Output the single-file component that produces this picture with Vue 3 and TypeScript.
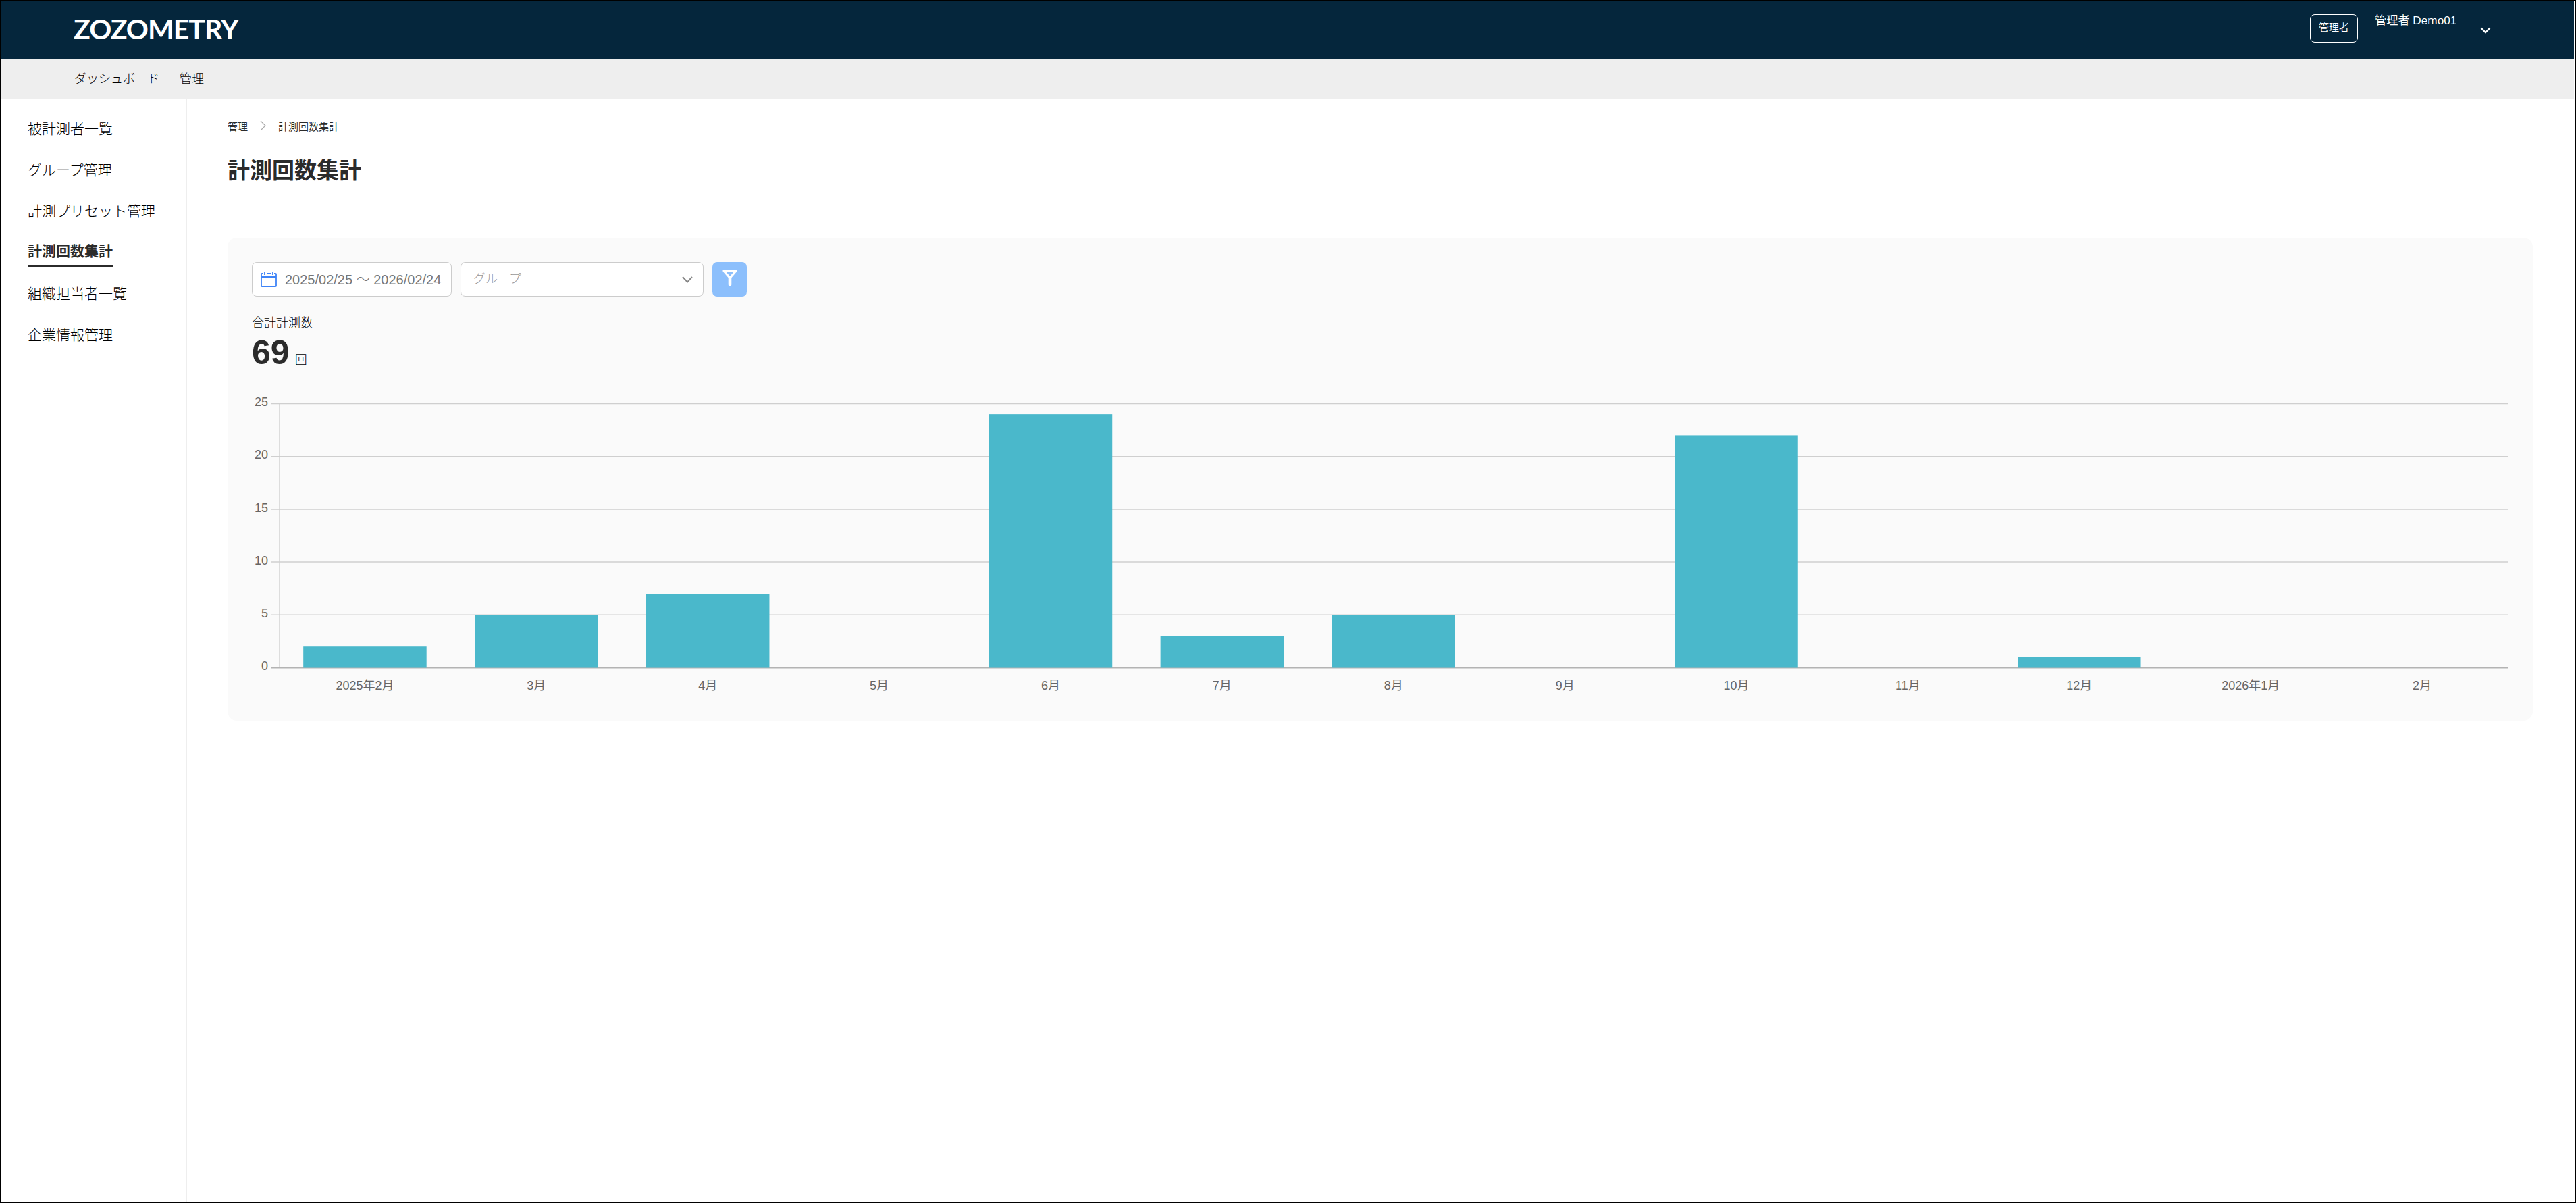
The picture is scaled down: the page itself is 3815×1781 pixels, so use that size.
<script setup lang="ts">
const sideItems = [
  { label: '被計測者一覧', active: false },
  { label: 'グループ管理', active: false },
  { label: '計測プリセット管理', active: false },
  { label: '計測回数集計', active: true },
  { label: '組織担当者一覧', active: false },
  { label: '企業情報管理', active: false },
]

const months = [
  { label: '2025年2月', count: 2 },
  { label: '3月', count: 5 },
  { label: '4月', count: 7 },
  { label: '5月', count: 0 },
  { label: '6月', count: 24 },
  { label: '7月', count: 3 },
  { label: '8月', count: 5 },
  { label: '9月', count: 0 },
  { label: '10月', count: 22 },
  { label: '11月', count: 0 },
  { label: '12月', count: 1 },
  { label: '2026年1月', count: 0 },
  { label: '2月', count: 0 },
]

const ticks = [0, 5, 10, 15, 20, 25]

const chartW = 3342
const chartH = 450
const plotL = 40.5
const plotR = 3341
const plotT = 17.5
const plotH = 391
const catW = (plotR - plotL) / months.length
const barW = 182.5

const tickY = (v: number) => plotT + plotH - (v / 25) * plotH
const catX = (i: number) => plotL + catW * i + catW / 2
</script>

<template>
  <div class="frame">
    <header class="topbar">
      <div class="logo">ZOZOMETRY</div>
      <div class="account">
        <span class="role">管理者</span>
        <span class="user">管理者 Demo01</span>
        <svg class="user-arrow" width="16" height="10" viewBox="0 0 16 10">
          <path d="M1.5 1.5 8 8l6.5-6.5" fill="none" stroke="#fff" stroke-width="2.4" />
        </svg>
      </div>
    </header>
    <nav class="subnav">
      <a>ダッシュボード</a>
      <a>管理</a>
    </nav>
    <div class="body">
      <aside class="side">
        <div v-for="item in sideItems" :key="item.label" class="side-item">
          <span :class="{ active: item.active }">{{ item.label }}</span>
        </div>
      </aside>
      <main class="main">
        <div class="crumbs">
          <span>管理</span>
          <svg width="9" height="16" viewBox="0 0 9 16">
            <path d="M1 1l7 7-7 7" fill="none" stroke="#aaa" stroke-width="1.2" />
          </svg>
          <span>計測回数集計</span>
        </div>
        <h1 class="title">計測回数集計</h1>
        <section class="card">
          <div class="filters">
            <div class="field date-field">
              <svg width="24" height="23" viewBox="0 0 24 23">
                <path
                  d="M4 3H2a1 1 0 0 0-1 1v17a1 1 0 0 0 1 1h20a1 1 0 0 0 1-1V4a1 1 0 0 0-1-1h-2M9 3h6M6 .5V5M18 .5V5M1 8h22"
                  fill="none"
                  stroke="#3f84f7"
                  stroke-width="1.8"
                />
              </svg>
              <span class="date-text">2025/02/25 ～ 2026/02/24</span>
            </div>
            <div class="field group-field">
              <span class="placeholder">グループ</span>
              <svg width="16" height="10" viewBox="0 0 16 10">
                <path d="M1 1l7 7.5L15 1" fill="none" stroke="#888" stroke-width="2" />
              </svg>
            </div>
            <button class="filter-btn">
              <svg width="24" height="24" viewBox="0 0 24 24">
                <path d="M3 2h18L12 12.5z" fill="none" stroke="#fff" stroke-width="3.2" stroke-linejoin="round" />
                <path d="M12 12v10" stroke="#fff" stroke-width="4.6" stroke-linecap="round" />
              </svg>
            </button>
          </div>
          <div class="total-label">合計計測数</div>
          <div class="total">
            <strong>69</strong>
            <span>回</span>
          </div>
          <svg class="chart" :width="chartW" :height="chartH" :viewBox="`0 0 ${chartW} ${chartH}`">
            <line :x1="plotL" :x2="plotL" :y1="plotT" :y2="plotT + plotH" stroke="#ddd" stroke-width="1" />
            <g v-for="t in ticks" :key="t">
              <line
                x1="29"
                :x2="plotR"
                :y1="tickY(t)"
                :y2="tickY(t)"
                :stroke="t === 0 ? '#b3b3b3' : '#cfcfcf'"
                :stroke-width="t === 0 ? 2 : 1.5"
              />
              <text class="tick" x="24" :y="tickY(t) - 1" text-anchor="end" dominant-baseline="middle">{{ t }}</text>
            </g>
            <rect
              v-for="(m, i) in months"
              :key="m.label"
              :x="catX(i) - barW / 2"
              :y="tickY(m.count)"
              :width="barW"
              :height="(m.count / 25) * plotH"
              fill="#4ab8cb"
            />
            <text
              v-for="(m, i) in months"
              :key="`x-${m.label}`"
              class="tick"
              :x="catX(i)"
              y="436"
              text-anchor="middle"
              dominant-baseline="middle"
            >{{ m.label }}</text>
          </svg>
        </section>
      </main>
    </div>
  </div>
</template>

<style>
html,
body {
  margin: 0;
  background: #fff;
}
</style>

<style scoped>
.frame {
  box-sizing: border-box;
  width: 100%;
  height: 100vh;
  display: flex;
  flex-direction: column;
  border: 1px solid #000;
  padding-right: 2px;
  overflow: hidden;
  color: #000;
  font-family: "Liberation Sans", "Noto Sans CJK JP", sans-serif;
  font-weight: 300;
}

.topbar {
  flex: 0 0 86px;
  display: flex;
  justify-content: space-between;
  background: #05263c;
  color: #fff;
  padding-left: 108px;
}

.logo {
  font-family: Lato, sans-serif;
  font-weight: 700;
  font-size: 41px;
  line-height: 84px;
  letter-spacing: -1px;
}

.account {
  position: relative;
  width: 391px;
}

.role {
  position: absolute;
  left: 0;
  top: 20px;
  box-sizing: border-box;
  width: 71px;
  height: 42px;
  border: 1.5px solid #fff;
  border-radius: 7px;
  font-size: 15px;
  font-weight: 400;
  line-height: 38px;
  text-align: center;
}

.user {
  position: absolute;
  left: 96px;
  top: 18px;
  font-size: 17.2px;
  line-height: 22px;
  font-weight: 400;
  white-space: nowrap;
}

.user-arrow {
  position: absolute;
  left: 252px;
  top: 39px;
}

.subnav {
  flex: 0 0 60px;
  box-sizing: border-box;
  display: flex;
  align-items: center;
  gap: 30px;
  padding: 0 0 5px 109px;
  background: #eee;
  font-size: 18px;
}

.body {
  flex: 1;
  display: flex;
  min-height: 0;
}

.side {
  box-sizing: border-box;
  flex: 0 0 276px;
  border-right: 1px solid #eee;
  padding: 13px 0 0 40px;
  font-size: 21px;
}

.side-item {
  height: 61px;
  line-height: 61px;
}

.side-item .active {
  display: inline-block;
  height: 40px;
  line-height: 40px;
  margin-top: 9px;
  border-bottom: 3px solid #2b2b2b;
  color: #2b2b2b;
  font-weight: 700;
  vertical-align: top;
}

.main {
  flex: 1;
  min-width: 0;
  padding: 28px 61px 0 60px;
}

.crumbs {
  display: flex;
  align-items: center;
  gap: 18px;
  height: 22px;
  font-size: 15px;
  font-weight: 400;
  color: #2b2b2b;
}

.title {
  margin: 32px 0 75px;
  font-size: 33px;
  line-height: 48px;
  font-weight: 700;
  color: #2b2b2b;
}

.card {
  box-sizing: border-box;
  height: 715px;
  padding: 36px;
  background: #fafafa;
  border-radius: 14px;
}

.filters {
  display: flex;
  gap: 13px;
  height: 51px;
}

.field {
  box-sizing: border-box;
  display: flex;
  align-items: center;
  background: #fff;
  border: 1.5px solid #ccc;
  border-radius: 7px;
}

.date-field {
  width: 296px;
  padding-left: 12px;
  gap: 12px;
  color: #777;
  font-size: 20px;
  white-space: nowrap;
}

.date-text {
  margin-top: -2px;
}

.group-field {
  width: 360px;
  padding: 0 15px 0 18px;
  justify-content: space-between;
}

.placeholder {
  font-size: 18px;
  color: #999;
  margin-top: -6px;
}

.filter-btn {
  width: 51px;
  height: 51px;
  padding: 0 0 5px;
  display: flex;
  align-items: center;
  justify-content: center;
  border: none;
  border-radius: 7px;
  background: #8cbffc;
}

.total-label {
  margin-top: 26px;
  font-size: 18px;
  line-height: 26px;
}

.total {
  display: flex;
  align-items: baseline;
  gap: 8px;
  height: 56px;
  margin-top: 3px;
}

.total strong {
  font-size: 50px;
  line-height: 56px;
  font-weight: 700;
  color: #2b2b2b;
}

.total span {
  font-size: 18px;
}

.chart {
  display: block;
  margin-top: 30px;
}

.tick {
  font-size: 18px;
  font-weight: 400;
  fill: #666;
}
</style>
